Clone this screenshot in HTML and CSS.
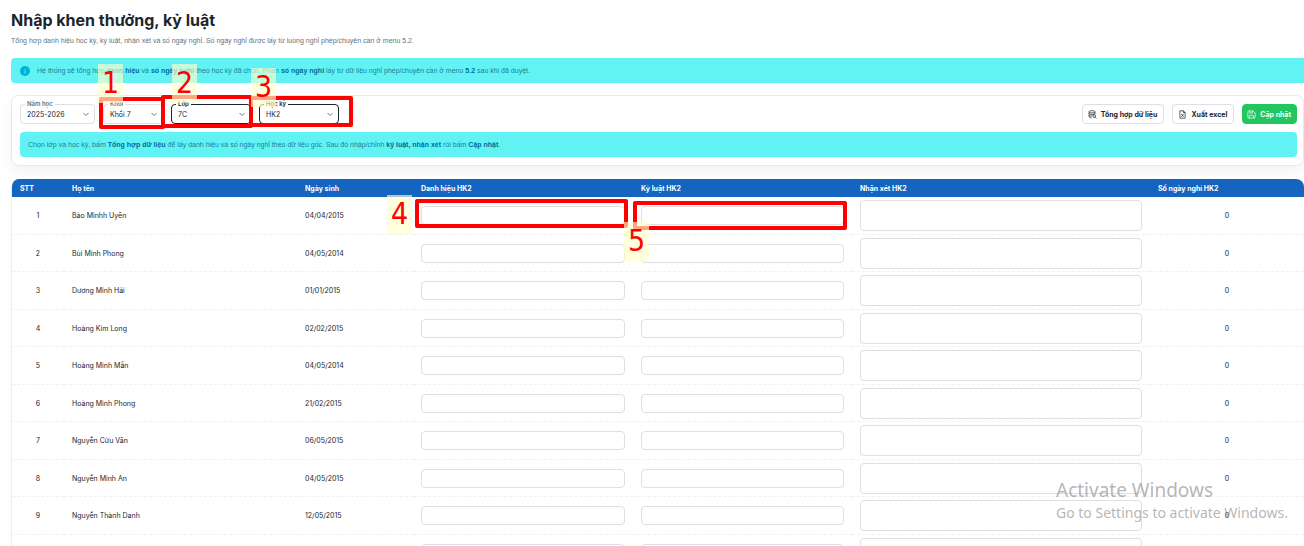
FILE: index.html
```
<!DOCTYPE html>
<html lang="vi">
<head>
<meta charset="utf-8">
<title>Nhập khen thưởng, kỷ luật</title>
<link rel="stylesheet" href="styles.css">
</head>
<body>
<main class="page">
  <h1 class="title">Nhập khen thưởng, kỷ luật</h1>
  <p class="subtitle">Tổng hợp danh hiệu học kỳ, kỷ luật, nhận xét và số ngày nghỉ. Số ngày nghỉ được lấy từ luồng nghỉ phép/chuyên cần ở menu 5.2.</p>

  <div class="alert alert-page">
    <svg class="info" viewBox="0 0 10 10" aria-hidden="true"><circle cx="5" cy="5" r="5" fill="#00b4d8"/><path d="M5 4.4v3M5 2.6v.9" stroke="#5df0f0" stroke-width="1"/></svg>
    <p>Hệ thống sẽ tổng hợp <b>danh hiệu</b> và <b>số ngày nghỉ</b> theo học kỳ đã chọn. Phần <b>số ngày nghỉ</b> lấy từ dữ liệu nghỉ phép/chuyên cần ở menu <b>5.2</b> sau khi đã duyệt.</p>
  </div>

  <section class="card">
    <div class="toolbar">
      <div class="field field-year"><label for="year">Năm học</label><select id="year"><option>2025-2026</option></select><svg class="chev" viewBox="0 0 8 8" aria-hidden="true"><path d="M1.5 3 4 5.5 6.5 3"/></svg></div>
      <div class="field field-grade"><label for="grade">Khối</label><select id="grade"><option>Khối 7</option></select><svg class="chev" viewBox="0 0 8 8" aria-hidden="true"><path d="M1.5 3 4 5.5 6.5 3"/></svg></div>
      <div class="field field-dark"><label for="class">Lớp</label><select id="class"><option>7C</option></select><svg class="chev" viewBox="0 0 8 8" aria-hidden="true"><path d="M1.5 3 4 5.5 6.5 3"/></svg></div>
      <div class="field field-dark"><label for="term">Học kỳ</label><select id="term"><option>HK2</option></select><svg class="chev" viewBox="0 0 8 8" aria-hidden="true"><path d="M1.5 3 4 5.5 6.5 3"/></svg></div>
      <div class="actions">
        <button class="btn" type="button"><svg viewBox="0 0 10 10" aria-hidden="true"><ellipse cx="4.5" cy="2" rx="3.3" ry="1.3"/><path d="M1.2 2v5.4c0 .8 1.2 1.3 2.8 1.4M7.8 2v2.6M1.2 3.8c0 1.8 6.6 1.8 6.6 0M1.2 5.6c0 .9 1.6 1.4 3.2 1.3"/><circle cx="6.9" cy="6.8" r="1.5"/><path d="m8 8 1.4 1.4"/></svg>Tổng hợp dữ liệu</button>
        <button class="btn" type="button"><svg viewBox="0 0 10 10" aria-hidden="true"><path d="M6 .9H2.1v8.2h5.8V2.8zM6 .9v1.9h1.9M3.8 4.4l2.4 3.2M6.2 4.4 3.8 7.6"/></svg>Xuất excel</button>
        <button class="btn btn-save" type="button"><svg viewBox="0 0 10 10" aria-hidden="true"><path d="M1.8 1h4.9L9 3.3v4.9q0 .8-.8.8H1.8Q1 9 1 8.200V1.800Q1 1 1.800 1zM3 1v2.400h3V1M2.800 9V6.700q0-.8.8-.8h2.800q.8 0 .8.8V9"/></svg>Cập nhật</button>
      </div>
    </div>
    <div class="alert">
      <p>Chọn lớp và học kỳ, bấm <b>Tổng hợp dữ liệu</b> để lấy danh hiệu và số ngày nghỉ theo dữ liệu gốc. Sau đó nhập/chỉnh <b>kỷ luật, nhận xét</b> rồi bấm <b>Cập nhật</b>.</p>
    </div>
  </section>

  <div class="table-card">
    <table>
      <colgroup><col class="c-no"><col class="c-name"><col class="c-birth"><col class="c-input"><col class="c-rule"><col class="c-note"><col></colgroup>
      <thead><tr><th>STT</th><th>Họ tên</th><th>Ngày sinh</th><th>Danh hiệu HK2</th><th>Kỷ luật HK2</th><th>Nhận xét HK2</th><th>Số ngày nghỉ HK2</th></tr></thead>
      <tbody>
        <tr><td>1</td><td>Bảo Minhh Uyên</td><td>04/04/2015</td><td><input type="text" aria-label="Danh hiệu 1"></td><td><input type="text" aria-label="Kỷ luật 1"></td><td><textarea aria-label="Nhận xét 1"></textarea></td><td>0</td></tr>
        <tr><td>2</td><td>Bùi Minh Phong</td><td>04/05/2014</td><td><input type="text" aria-label="Danh hiệu 2"></td><td><input type="text" aria-label="Kỷ luật 2"></td><td><textarea aria-label="Nhận xét 2"></textarea></td><td>0</td></tr>
        <tr><td>3</td><td>Dương Minh Hải</td><td>01/01/2015</td><td><input type="text" aria-label="Danh hiệu 3"></td><td><input type="text" aria-label="Kỷ luật 3"></td><td><textarea aria-label="Nhận xét 3"></textarea></td><td>0</td></tr>
        <tr><td>4</td><td>Hoàng Kim Long</td><td>02/02/2015</td><td><input type="text" aria-label="Danh hiệu 4"></td><td><input type="text" aria-label="Kỷ luật 4"></td><td><textarea aria-label="Nhận xét 4"></textarea></td><td>0</td></tr>
        <tr><td>5</td><td>Hoàng Minh Mẫn</td><td>04/05/2014</td><td><input type="text" aria-label="Danh hiệu 5"></td><td><input type="text" aria-label="Kỷ luật 5"></td><td><textarea aria-label="Nhận xét 5"></textarea></td><td>0</td></tr>
        <tr><td>6</td><td>Hoàng Minh Phong</td><td>21/02/2015</td><td><input type="text" aria-label="Danh hiệu 6"></td><td><input type="text" aria-label="Kỷ luật 6"></td><td><textarea aria-label="Nhận xét 6"></textarea></td><td>0</td></tr>
        <tr><td>7</td><td>Nguyễn Cửu Vân</td><td>06/05/2015</td><td><input type="text" aria-label="Danh hiệu 7"></td><td><input type="text" aria-label="Kỷ luật 7"></td><td><textarea aria-label="Nhận xét 7"></textarea></td><td>0</td></tr>
        <tr><td>8</td><td>Nguyễn Minh An</td><td>04/05/2015</td><td><input type="text" aria-label="Danh hiệu 8"></td><td><input type="text" aria-label="Kỷ luật 8"></td><td><textarea aria-label="Nhận xét 8"></textarea></td><td>0</td></tr>
        <tr><td>9</td><td>Nguyễn Thành Danh</td><td>12/05/2015</td><td><input type="text" aria-label="Danh hiệu 9"></td><td><input type="text" aria-label="Kỷ luật 9"></td><td><textarea aria-label="Nhận xét 9"></textarea></td><td>0</td></tr>
        <tr><td></td><td></td><td></td><td><input type="text" aria-label="Danh hiệu 10"></td><td><input type="text" aria-label="Kỷ luật 10"></td><td><textarea aria-label="Nhận xét 10"></textarea></td><td></td></tr>
      </tbody>
    </table>
  </div>
</main>

<div class="mark mark-1"></div>
<div class="mark mark-2"></div>
<div class="mark mark-3"></div>
<div class="mark mark-4"></div>
<div class="mark mark-5"></div>
<span class="step step-1">1</span>
<span class="step step-2">2</span>
<span class="step step-3">3</span>
<span class="step step-4">4</span>
<span class="step step-5">5</span>

<div class="watermark"><p class="wm-title">Activate Windows</p><p class="wm-text">Go to Settings to activate Windows.</p></div>
</body>
</html>
```
FILE: styles.css
```
* { box-sizing: border-box; }
html, body { height: 100%; }
body {
  margin: 0;
  position: relative;
  overflow: hidden;
  background: #fff;
  color: #1c252e;
  font: 7px/11px Inter, "Noto Sans", sans-serif;
}
p, h1 { margin: 0; }
.page { padding: 10px 0 0 11px; }
.title { font-size: 16px; line-height: 20px; font-weight: 700; }
.subtitle { margin-top: 5px; color: #637381; font-family: "Liberation Sans", sans-serif; }

.alert {
  display: flex;
  align-items: center;
  gap: 7px;
  height: 25px;
  padding: 0 8px;
  border-radius: 4px;
  background: #61f3f3;
  color: #1a7f9c;
  font-family: "Liberation Sans", sans-serif;
}
.alert b { color: #006c9c; font-weight: 700; }
.alert-page { margin-top: 12px; padding: 0 9px; border-radius: 4px 0 0 4px; }
.info { width: 10px; height: 10px; }

.card {
  margin-top: 12px;
  padding: 8px 6px 8px 8px;
  border: 1px solid #e8eaed;
  border-radius: 8px;
  box-shadow: 0 6px 12px rgba(145, 158, 171, .12);
}
.toolbar { display: flex; gap: 8px; margin-bottom: 8px; }
.field { position: relative; width: 80px; height: 20px; }
.field-year { width: 75px; }
.field-grade { width: 60px; }
.field label {
  position: absolute;
  top: -4px;
  left: 5px;
  padding: 0 2px;
  background: #fff;
  color: #637381;
  font-size: 6px;
  line-height: 8px;
  font-weight: 600;
}
.field select {
  appearance: none;
  width: 100%;
  height: 100%;
  padding: 0 6px;
  border: 1px solid #dce0e4;
  border-radius: 4px;
  background: none;
  color: #1c252e;
  font: inherit;
}
.field-dark select { border-color: #1c252e; }
.field-dark label { color: #1c252e; }
.chev { position: absolute; right: 5px; top: 6px; width: 8px; height: 8px; pointer-events: none; fill: none; stroke: #637381; }

.actions { display: flex; gap: 8px; margin-left: auto; }
.btn {
  display: flex;
  align-items: center;
  gap: 4px;
  height: 20px;
  padding: 0 6px 0 5px;
  border: 1px solid #dce0e4;
  border-radius: 4px;
  background: #fff;
  color: #1c252e;
  font: inherit;
  font-weight: 700;
}
.btn svg { width: 9px; height: 9px; fill: none; stroke: currentColor; stroke-width: .8; }
.btn-save { padding: 0 5px 0 4px; border-color: #22c55e; background: #22c55e; color: #fff; }

.table-card {
  margin-top: 13px;
  border-left: 1px solid #eceef0;
  border-radius: 8px 8px 0 0;
  overflow: hidden;
}
table { width: 100%; table-layout: fixed; border-collapse: separate; border-spacing: 0; }
.c-no { width: 52px; }
.c-name { width: 233px; }
.c-birth { width: 116px; }
.c-input { width: 220px; }
.c-rule { width: 219px; }
.c-note { width: 298px; }
th { height: 18px; padding: 0 8px; background: #1565c0; color: #fff; font-weight: 700; text-align: left; }
td { height: 38px; padding: 0 8px; border-bottom: 1px dashed #eef0f2; vertical-align: middle; }
tr:nth-child(even) td { height: 37px; }
td:first-child, td:last-child { text-align: center; }
td input, td textarea {
  display: block;
  width: 100%;
  height: 19px;
  padding: 2px 6px;
  border: 1px solid #dce0e4;
  border-radius: 4px;
  background: #fff;
  font: inherit;
  resize: none;
}
td textarea { height: 31px; }

/* annotation overlay */
.mark { position: absolute; border: 4px solid #f00; border-radius: 2px; }
.mark-1 { left: 99px; top: 97px; width: 66px; height: 32px; }
.mark-2 { left: 161px; top: 95px; width: 92px; height: 33px; }
.mark-3 { left: 249px; top: 96px; width: 104px; height: 31px; }
.mark-4 { left: 415px; top: 199px; width: 213px; height: 29px; }
.mark-5 { left: 633px; top: 201px; width: 214px; height: 29px; }
.step {
  position: absolute;
  width: 25px;
  height: 39px;
  background: rgba(255, 255, 204, .65);
  color: #f00;
  font: 30px/38px "DejaVu Sans Condensed", "DejaVu Sans", sans-serif;
  text-align: center;
}
.step-1 { left: 98px; top: 64px; }
.step-2 { left: 172px; top: 64px; }
.step-3 { left: 251px; top: 68px; }
.step-4 { left: 387px; top: 195px; }
.step-5 { left: 624px; top: 222px; }

.watermark { position: absolute; right: 12px; bottom: 23px; width: 236px; color: rgba(140, 140, 140, .65); font-family: "Noto Sans", "Open Sans", sans-serif; white-space: nowrap; }
.wm-title { font-size: 19px; line-height: 24px; }
.wm-text { font-size: 14px; line-height: 21px; }
```
